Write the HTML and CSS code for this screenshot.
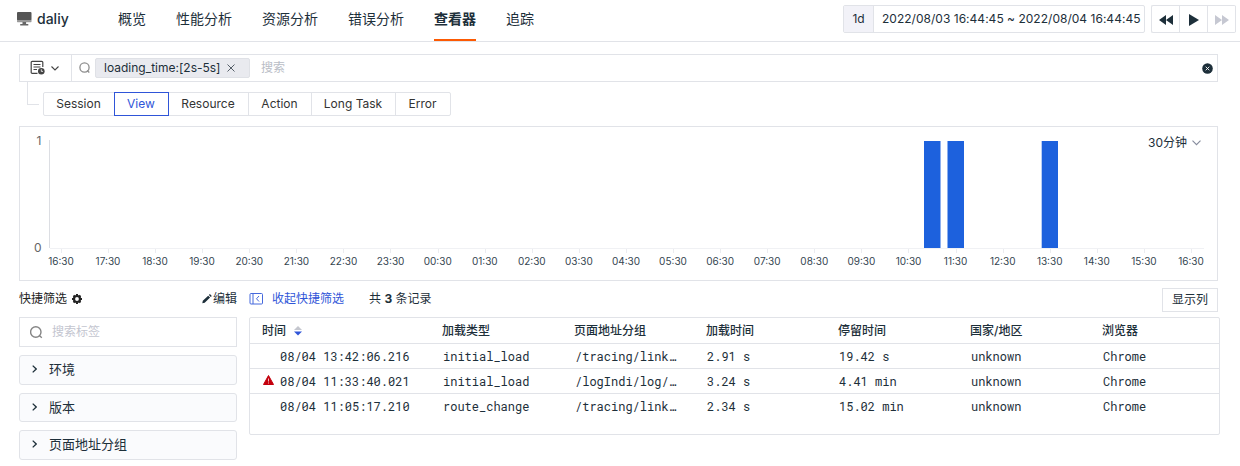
FILE: index.html
```html
<!DOCTYPE html>
<html lang="zh-CN">
<head>
<meta charset="utf-8">
<title>daliy - 查看器</title>
<link rel="stylesheet" href="styles.css">
</head>
<body>
<header class="header">
  <div class="app">
    <svg width="15" height="14" viewBox="0 0 15 14"><rect x="0" y="0" width="14.500" height="8.500" rx="1" fill="#555"/><rect x="0" y="8" width="14.500" height="2.200" rx=".6" fill="#999"/><path d="M5.500 10h3.600v2h2.200v1.600H3.200V12h2.300z" fill="#666"/></svg>
    <span class="app-name">daliy</span>
  </div>
  <nav class="nav">
    <a>概览</a><a>性能分析</a><a>资源分析</a><a>错误分析</a><a class="active">查看器</a><a>追踪</a>
  </nav>
  <div class="time">
    <span class="time-span">1d</span><span class="time-range">2022/08/03 16:44:45 ~ 2022/08/04 16:44:45</span>
  </div>
  <div class="player">
    <span><svg width="14" height="10" viewBox="0 0 14 10"><path d="M7 0v10L0 5zM14 0v10L7 5z" fill="#1d2f3a"/></svg></span>
    <span><svg width="10" height="12" viewBox="0 0 10 12"><path d="M0 0L10 6L0 12z" fill="#1d2f3a"/></svg></span>
    <span><svg width="14" height="10" viewBox="0 0 14 10"><path d="M0 0v10l7-5zM7 0v10l7-5z" fill="#c6c8d2"/></svg></span>
  </div>
</header>

<main class="main">
  <div class="search">
    <div class="history">
      <svg width="16" height="16" viewBox="0 0 16 16" fill="none" stroke="#444" stroke-width="1.200"><path d="M7.500 13.400H2.200a1 1 0 0 1-1-1V2.300a1 1 0 0 1 1-1h9.600a1 1 0 0 1 1 1V7M3.500 4.500h7M3.500 7h7M3.500 9.500h3.500"/><circle cx="11.300" cy="11.300" r="3.300" fill="#444" stroke="none"/><path d="M11.300 9.300v2.100h1.700" stroke="#fff" stroke-width=".8"/></svg>
      <svg width="8" height="5" viewBox="0 0 8 5" fill="none" stroke="#444" stroke-width="1.100"><path d="M.5.5L4 4L7.500.5"/></svg>
    </div>
    <div class="query">
      <svg class="lens" width="12" height="12" viewBox="0 0 12 12" fill="none" stroke="#8d8d8d" stroke-width="1.300"><circle cx="5.500" cy="5.500" r="4.600"/><path d="M8 8.500l2.300 2"/></svg>
      <span class="tag">loading_time:[2s-5s]<svg width="8" height="8" viewBox="0 0 8 8" stroke="#555e68" stroke-width="1"><path d="M.5.5l7 7M7.500.5l-7 7"/></svg></span>
      <span class="placeholder">搜索</span>
      <svg class="clear" width="11" height="11" viewBox="0 0 11 11"><circle cx="5.500" cy="5.500" r="5.300" fill="#1d2f3a"/><path d="M3.700 3.700l3.600 3.600M7.300 3.700L3.700 7.300" stroke="#fff" stroke-width=".9"/></svg>
    </div>
  </div>

  <div class="types">
    <div class="branch"></div>
    <div class="tabs"><span class="w70">Session</span><span class="selected w55">View</span><span class="w80">Resource</span><span class="w63">Action</span><span class="w84">Long Task</span><span class="w54">Error</span></div>
  </div>

  <section class="chart">
    <svg class="plot" width="1197" height="153" viewBox="20 127 1197 153">
      <path d="M49.500 140V248" stroke="#dcdee3"/>
      <path d="M50 248.500H1204" stroke="#f0f1f4"/>
      <path d="M61.500 249v4M108.500 249v4M155.500 249v4M202.500 249v4M249.500 249v4M296.500 249v4M343.500 249v4M390.500 249v4M438.500 249v4M485.500 249v4M532.500 249v4M579.500 249v4M626.500 249v4M673.500 249v4M720.500 249v4M767.500 249v4M814.500 249v4M861.500 249v4M908.500 249v4M956.500 249v4M1003.500 249v4M1050.500 249v4M1097.500 249v4M1144.500 249v4M1191.500 249v4" stroke="#ebecf0"/>
      <g fill="#1d61dd"><rect x="924" y="141" width="16.500" height="107"/><rect x="947.500" y="141" width="16.500" height="107"/><rect x="1041.700" y="141" width="16.300" height="107"/></g>
      <g class="y-label"><text x="41.500" y="145">1</text><text x="41.500" y="252">0</text></g>
      <g class="x-label"><text x="61" y="265">16:30</text><text x="108" y="265">17:30</text><text x="155" y="265">18:30</text><text x="202" y="265">19:30</text><text x="249.300" y="265">20:30</text><text x="296.400" y="265">21:30</text><text x="343.500" y="265">22:30</text><text x="390.600" y="265">23:30</text><text x="437.700" y="265">00:30</text><text x="484.800" y="265">01:30</text><text x="531.800" y="265">02:30</text><text x="578.900" y="265">03:30</text><text x="626" y="265">04:30</text><text x="673" y="265">05:30</text><text x="720.100" y="265">06:30</text><text x="767.200" y="265">07:30</text><text x="814.300" y="265">08:30</text><text x="861.400" y="265">09:30</text><text x="908.500" y="265">10:30</text><text x="955.600" y="265">11:30</text><text x="1002.700" y="265">12:30</text><text x="1049.700" y="265">13:30</text><text x="1096.800" y="265">14:30</text><text x="1143.900" y="265">15:30</text><text x="1191" y="265">16:30</text></g>
    </svg>
    <div class="interval">30分钟<svg width="9" height="6" viewBox="0 0 9 6" fill="none" stroke="#858b9c" stroke-width="1.100"><path d="M.5.700l4 4l4-4"/></svg></div>
  </section>

  <div class="content">
    <aside class="side">
      <div class="side-head">
        <span class="side-title">快捷筛选</span>
        <svg width="10" height="10" viewBox="0 0 10 10"><circle cx="5" cy="5" r="3" fill="none" stroke="#222" stroke-width="2.200"/><path d="M5 0v1.500M5 8.500V10M0 5h1.500M8.500 5H10M1.500 1.500l1 1M7.500 7.500l1 1M8.500 1.500l-1 1M1.500 8.500l1-1" stroke="#222" stroke-width="2"/></svg>
        <span class="edit"><svg width="10" height="10" viewBox="0 0 10 10" fill="#1d2f3a"><path d="M.3 9.200l.5-2.400L6.200 1.700l1.900 1.900L2.700 8.700zM6.900 1.100L7.900 .1L9.800 2L8.800 3z"/></svg>编辑</span>
      </div>
      <div class="side-search"><svg width="14" height="13" viewBox="0 0 14 13" fill="none" stroke="#858585" stroke-width="1.400"><circle cx="5.800" cy="6" r="5.200"/><path d="M9.300 9.500l2.500 2.200"/></svg>搜索标签</div>
      <div class="facets">
        <div class="facet"><svg width="5" height="8" viewBox="0 0 5 8" fill="none" stroke="#1d2f3a" stroke-width="1.300"><path d="M.7.600L4.200 4L.7 7.400"/></svg>环境</div>
        <div class="facet"><svg width="5" height="8" viewBox="0 0 5 8" fill="none" stroke="#1d2f3a" stroke-width="1.300"><path d="M.7.600L4.200 4L.7 7.400"/></svg>版本</div>
        <div class="facet"><svg width="5" height="8" viewBox="0 0 5 8" fill="none" stroke="#1d2f3a" stroke-width="1.300"><path d="M.7.600L4.200 4L.7 7.400"/></svg>页面地址分组</div>
      </div>
    </aside>
    <section class="result">
      <div class="bar">
        <span class="collapse"><svg width="14" height="12" viewBox="0 0 14 12" fill="none" stroke="#4568dc"><rect x="1" y=".5" width="12.500" height="10.500" rx="1"/><path d="M4 .5v10.500M10 3L7.500 5.750L10 8.500"/></svg>收起快捷筛选</span>
        <span class="count">共 <b>3</b> 条记录</span>
        <span class="columns">显示列</span>
      </div>
      <div class="table">
        <div class="row head"><span>时间<svg class="sort" width="8" height="10" viewBox="0 0 8 10"><path d="M0 4L4 0L8 4z" fill="#c4c6ce"/><path d="M0 5.500h8L4 9.500z" fill="#2f55d8"/></svg></span><span>加载类型</span><span>页面地址分组</span><span>加载时间</span><span>停留时间</span><span>国家/地区</span><span>浏览器</span></div>
        <div class="row"><span class="when"><i></i>08/04 13:42:06.216</span><span>initial_load</span><span>/tracing/link…</span><span>2.91 s</span><span>19.42 s</span><span>unknown</span><span>Chrome</span></div>
        <div class="row"><span class="when"><i><svg width="11" height="10" viewBox="0 0 11 10"><path d="M5.500.500L10.500 9.500H.500z" fill="#c4000d" stroke="#c4000d" stroke-linejoin="round"/><path d="M5.500 3.500v3M5.500 7.500v1" stroke="#fff" stroke-opacity=".75" stroke-width="1"/></svg></i>08/04 11:33:40.021</span><span>initial_load</span><span>/logIndi/log/…</span><span>3.24 s</span><span>4.41 min</span><span>unknown</span><span>Chrome</span></div>
        <div class="row"><span class="when"><i></i>08/04 11:05:17.210</span><span>route_change</span><span>/tracing/link…</span><span>2.34 s</span><span>15.02 min</span><span>unknown</span><span>Chrome</span></div>
      </div>
    </section>
  </div>
</main>
</body>
</html>
```
FILE: styles.css
```css
* { box-sizing: border-box; }
body {
  margin: 0;
  height: 466px;
  overflow: hidden;
  background: #fff;
  color: #1d2f3a;
  font: 12px/18px Inter, "Noto Sans CJK SC", sans-serif;
}
svg { display: block; flex: none; }
span, a { white-space: nowrap; }

.header {
  display: flex;
  height: 42px;
  padding-left: 17px;
  border-bottom: 1px solid #e1e3e8;
}
.app { display: flex; gap: 5px; width: 101px; padding-top: 12px; }
.app-name { font-size: 14px; font-weight: 500; line-height: 14px; }
.nav { display: flex; gap: 30px; height: 41px; flex: 1; }
.nav a { font-size: 14px; line-height: 38px; height: 41px; }
.nav .active { font-weight: 700; border-bottom: 2px solid #fc5a03; }
.time {
  display: flex;
  width: 302px;
  height: 28px;
  margin-top: 5px;
  border: 1px solid #e1e3e8;
  border-radius: 2px;
  line-height: 26px;
}
.time-span { width: 30px; background: #f2f2f8; border-right: 1px solid #e1e3e8; text-align: center; }
.time-range { padding-left: 8px; letter-spacing: 0.02px; }
.player {
  display: grid;
  grid-template-columns: repeat(3, 28px);
  height: 28px;
  margin: 5px 4px 0 6px;
  border: 1px solid #e1e3e8;
  border-right: 0;
  border-radius: 2px;
}
.player span { display: flex; align-items: center; justify-content: center; padding-top: 2px; border-right: 1px solid #e1e3e8; }

.main { padding: 12px 20px 0 19px; }
.search { display: flex; width: 1199px; height: 28px; border: 1px solid #e1e3e8; }
.history { display: flex; align-items: center; gap: 5px; width: 52px; padding-left: 10px; border-right: 1px solid #e1e3e8; }
.query { display: flex; align-items: center; flex: 1; padding: 0 4px 0 7px; }
.tag {
  display: flex;
  align-items: center;
  gap: 7px;
  width: 155px;
  height: 20px;
  margin-left: 4px;
  padding-left: 8px;
  background: #e9eaef;
  border: 1px solid #dfe1e6;
  border-radius: 2px;
}
.placeholder { margin-left: 11px; flex: 1; color: #b9bdc6; }
.clear { margin-top: 1px; }

.types { display: flex; height: 34px; }
.branch { width: 12px; height: 23px; margin: 0 4px 0 8px; border-left: 1px solid #e1e3e8; border-bottom: 1px solid #e1e3e8; }
.tabs { display: flex; height: 24px; margin-top: 10px; border: 1px solid #e1e3e8; border-radius: 2px; color: #333; line-height: 22px; }
.tabs span { text-align: center; padding-right: 1px; border-right: 1px solid #e1e3e8; }
.tabs span:last-child { border: 0; }
.tabs .selected { margin: -1px 0; border: 1px solid #2f55d8; color: #2f55d8; }
.w54 { width: 54px; }
.w55 { width: 55px; }
.w63 { width: 63px; }
.w70 { width: 70px; }
.w80 { width: 80px; }
.w84 { width: 84px; }
.tabs .w70 { border: 0; }

.chart { position: relative; width: 1199px; height: 155px; margin-top: 10px; border: 1px solid #e1e3e8; }
.y-label { font-size: 12px; fill: #666; text-anchor: end; }
.x-label { font-size: 10px; fill: #344550; text-anchor: middle; }
.interval { position: absolute; top: 7px; right: 16px; display: flex; align-items: center; gap: 5px; }

.content { display: grid; grid-template-columns: 218px 971px; column-gap: 12px; }
.side-head { display: flex; align-items: center; gap: 5px; height: 36px; }
.side-title { color: #222; }
.edit { display: flex; align-items: center; gap: 1px; margin-left: auto; }
.side-search { display: flex; align-items: center; gap: 8px; height: 30px; padding-left: 10px; border: 1px solid #e1e3e8; color: #c3c5cf; }
.facets { display: grid; grid-template-rows: 30px 29px 30px; gap: 8px; margin-top: 8px; }
.facet { display: flex; align-items: center; gap: 12px; padding: 0 0 2px 12px; font-size: 13px; background: #fafbfd; border: 1px solid #e1e3e8; border-radius: 3px; }
.bar { display: flex; align-items: center; height: 36px; padding-right: 2px; }
.collapse { display: flex; align-items: center; gap: 9px; color: #2f55d8; }
.count { margin-left: 25px; }
.columns { width: 56px; height: 24px; margin: 2px 0 0 auto; border: 1px solid #e1e3e8; line-height: 22px; text-align: center; }
.table { height: 118px; border: 1px solid #e1e3e8; border-radius: 2px; }
.row {
  display: grid;
  grid-template-columns: 180px 132px 132px 132px 132px 132px 1fr;
  height: 25px;
  padding-left: 13px;
  border-bottom: 1px solid #e1e3e8;
  font-family: "Roboto Mono", "Liberation Mono", monospace;
  line-height: 25px;
}
.row:last-child { border-bottom: 0; }
.head { height: 26px; padding-left: 12px; font-family: Inter, "Noto Sans CJK SC", sans-serif; font-weight: 500; }
.head span:first-child { display: flex; align-items: center; gap: 8px; }
.sort { margin-top: 1px; }
.when { display: flex; }
.when i { width: 17px; padding-top: 6px; }
```
